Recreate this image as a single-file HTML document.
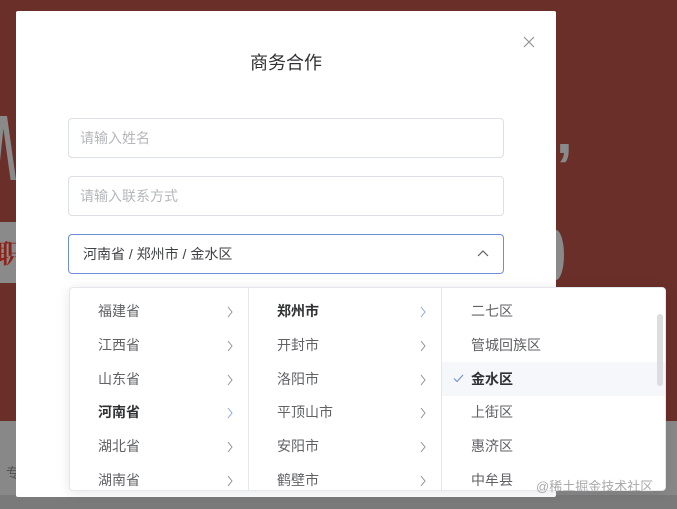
<!DOCTYPE html>
<html><head><meta charset="utf-8"><style>
*{margin:0;padding:0;box-sizing:border-box}
body{width:677px;height:509px;overflow:hidden;position:relative;background:#6b2f29;font-family:"Liberation Sans","Noto Sans CJK SC",sans-serif}
.abs{position:absolute}
.grey{background:#8a8a8a}
.modal{left:16px;top:11px;width:540px;height:486px;background:#fff;border-radius:2px}
.title{left:0;width:540px;top:38px;text-align:center;font-size:18px;color:#303133}
.inp{left:52px;width:436px;height:40px;border:1px solid #dcdfe6;border-radius:4px;font-size:14px;color:#b5b7bb;padding-left:11px;line-height:38px}
.panel{left:69px;top:287px;width:597px;height:204px;background:#fff;border:1px solid #e4e7ed;border-radius:4px;box-shadow:0 2px 12px rgba(0,0,0,.1);overflow:hidden}
.col{position:absolute;top:0;height:204px;border-right:1px solid #e4e7ed}
.item{position:absolute;left:0;right:0;height:34px;line-height:34px;font-size:14px;color:#606266}
.item b{font-weight:bold;color:#303133}
</style></head><body>
<div class="abs grey" style="left:0;top:421px;width:677px;height:88px;background:#888"></div>
<div class="abs" style="left:0;top:495px;width:677px;height:14px;background:#7a7a7a"></div>
<div class="abs grey" style="left:0;top:222px;width:16px;height:61px"></div>
<div class="abs" style="left:-4px;top:234px;font-size:26px;color:#8b231b;font-weight:bold;font-family:'Noto Serif CJK SC',serif">职</div>
<div class="abs" style="left:-2px;top:116px;width:18px;height:64px;background:#8a8a8a;clip-path:polygon(0 0,50% 0,100% 100%,70% 100%,30% 20%,0 100%)"></div>
<div class="abs" style="left:556px;top:115px;width:16px;height:36px;color:#8a8a8a;font-size:60px;line-height:36px;font-weight:bold">,</div>
<div class="abs" style="left:548px;top:230px;width:16px;height:50px;background:#8a8a8a;border-radius:0 50% 50% 0"></div>
<div class="abs" style="left:6px;top:463px;font-size:14px;color:#555">专</div>

<div class="abs modal">
  <div class="abs title">商务合作</div>
  <svg class="abs" style="left:507px;top:25px" width="12" height="12" viewBox="0 0 12 12"><path d="M1 1L11 11M11 1L1 11" stroke="#909399" stroke-width="1.2"/></svg>
  <div class="abs inp" style="top:107px">请输入姓名</div>
  <div class="abs inp" style="top:165px">请输入联系方式</div>
  <div class="abs inp" style="top:223px;border-color:#6e8fd8;color:#404246;padding-left:14px">河南省 / 郑州市 / 金水区
    <svg class="abs" style="left:408px;top:14px" width="12" height="8" viewBox="0 0 12 8"><path d="M1 7L6 2L11 7" fill="none" stroke="#606266" stroke-width="1.2"/></svg>
  </div>
</div>

<div class="abs panel">
  <div class="col" style="left:0;width:179px">
    <div class="item" style="top:6px;padding-left:28px">福建省</div>
    <div class="item" style="top:40px;padding-left:28px">江西省</div>
    <div class="item" style="top:74px;padding-left:28px">山东省</div>
    <div class="item" style="top:107px;padding-left:28px"><b>河南省</b></div>
    <div class="item" style="top:141px;padding-left:28px">湖北省</div>
    <div class="item" style="top:175px;padding-left:28px">湖南省</div>
  </div>
  <div class="col" style="left:179px;width:193px">
    <div class="item" style="top:6px;padding-left:28px"><b>郑州市</b></div>
    <div class="item" style="top:40px;padding-left:28px">开封市</div>
    <div class="item" style="top:74px;padding-left:28px">洛阳市</div>
    <div class="item" style="top:107px;padding-left:28px">平顶山市</div>
    <div class="item" style="top:141px;padding-left:28px">安阳市</div>
    <div class="item" style="top:175px;padding-left:28px">鹤壁市</div>
  </div>
  <div class="col" style="left:372px;width:225px;border-right:none">
    <div class="item" style="top:6px;padding-left:29px">二七区</div>
    <div class="item" style="top:40px;padding-left:29px">管城回族区</div>
    <div class="item" style="top:74px;padding-left:29px;background:#f5f7fa"><b>金水区</b>
      <svg class="abs" style="left:11px;top:12px" width="11" height="9" viewBox="0 0 11 9"><path d="M1 4.5L4 7.5L10 1" fill="none" stroke="#6e8fd8" stroke-width="1.1"/></svg>
    </div>
    <div class="item" style="top:107px;padding-left:29px">上街区</div>
    <div class="item" style="top:141px;padding-left:29px">惠济区</div>
    <div class="item" style="top:175px;padding-left:29px">中牟县</div>
    <div class="abs" style="left:215px;top:26px;width:6px;height:72px;background:#dcdde0;border-radius:3px"></div>
  </div>
  <svg class="abs" style="left:0;top:0" width="597" height="204">
    <g fill="none" stroke="#909399" stroke-width="1">
      <path d="M158 19L162 24L158 29M158 53L162 58L158 63M158 87L162 92L158 97M158 154L162 159L158 164M158 188L162 193L158 198"/>
      <path d="M351 53L355 58L351 63M351 87L355 92L351 97M351 120L355 125L351 130M351 154L355 159L351 164M351 188L355 193L351 198"/>
    </g>
    <g fill="none" stroke="#8fa6dc" stroke-width="1">
      <path d="M158 120L162 125L158 130M351 19L355 24L351 29"/>
    </g>
  </svg>
</div>
<div class="abs" style="left:536px;top:476px;font-size:13px;color:rgba(140,140,140,.75)">@稀土掘金技术社区</div>
</body></html>
